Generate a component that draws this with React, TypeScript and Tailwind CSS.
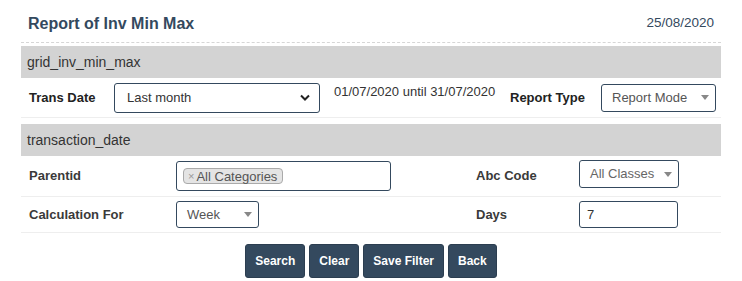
import React from "react";

function Caret() {
  return (
    <svg width="8" height="5" viewBox="0 0 8 5" className="shrink-0">
      <path d="M0 0 L8 0 L4 5 Z" fill="#888" />
    </svg>
  );
}

function Select2({ value, className }: { value: string; className: string }) {
  return (
    <div
      className={`flex items-center justify-between rounded-[3px] border border-[#34495e] bg-white pl-[10px] pr-[6px] text-[#555] ${className}`}
    >
      <span>{value}</span>
      <Caret />
    </div>
  );
}

function Band({ title }: { title: string }) {
  return (
    <div className="flex h-[32px] items-center bg-[#d3d3d3] pl-[6px] text-[14px] text-[#333]">
      {title}
    </div>
  );
}

export default function App() {
  const buttons = ["Search", "Clear", "Save Filter", "Back"];

  return (
    <div className="h-[281px] w-[742px] bg-white font-[family-name:Liberation_Sans,Arial,sans-serif] text-[13px] text-[#333]">
      <div className="ml-[21px] w-[700px]">
        {/* Header */}
        <div className="flex h-[43px] items-center justify-between border-b border-dashed border-[#d6d6d6] pl-[7px] pr-[7px] pt-[5px]">
          <h1 className="text-[16px] font-bold text-[#34495e]">Report of Inv Min Max</h1>
          <span className="text-[13.5px] text-[#34495e]">25/08/2020</span>
        </div>

        <div className="mt-[3px]">
          <Band title="grid_inv_min_max" />
        </div>

        {/* Trans date row */}
        <div className="flex h-[40px] items-center border-b border-[#eeeeee]">
          <div className="w-[93px] pl-[8px] font-bold text-[#222]">Trans Date</div>
          <div className="flex h-[30px] w-[206px] items-center justify-between rounded-[3px] border border-[#34495e] pl-[12px] pr-[9px] text-[#333]">
            <span>Last month</span>
            <svg width="10" height="7" viewBox="0 0 10 7">
              <polyline points="1,1.5 5,5.5 9,1.5" fill="none" stroke="#222" strokeWidth="2" />
            </svg>
          </div>
          <div className="ml-[14px] w-[176px] self-start pt-[4px]">01/07/2020 until 31/07/2020</div>
          <div className="w-[91px] font-bold text-[#222]">Report Type</div>
          <Select2 value="Report Mode" className="h-[28px] w-[115px]" />
        </div>

        <div className="mt-[6px]">
          <Band title="transaction_date" />
        </div>

        {/* Parentid row */}
        <div className="flex h-[41px] items-center border-b border-[#eeeeee]">
          <div className="w-[155px] pl-[8px] font-bold text-[#3a3a3a]">Parentid</div>
          <div className="flex h-[30px] w-[215px] items-center rounded-[3px] border border-[#34495e] pl-[6px]">
            <span className="flex h-[16px] items-center rounded-[4px] border border-[#aaa] bg-[#e4e4e4] pl-[4px] pr-[5px] leading-none text-[#555]">
              <span className="mr-[2px] text-[11px] text-[#999]">×</span>
              All Categories
            </span>
          </div>
          <div className="ml-[85px] w-[103px] font-bold text-[#3a3a3a]">Abc Code</div>
          <div className="self-start pt-[4px]">
            <Select2 value="All Classes" className="h-[28px] w-[100px] text-[#666]" />
          </div>
        </div>

        {/* Calculation row */}
        <div className="flex h-[36px] items-center border-b border-[#eeeeee]">
          <div className="w-[155px] pl-[8px] font-bold text-[#3a3a3a]">Calculation For</div>
          <Select2 value="Week" className="h-[27px] w-[83px]" />
          <div className="ml-[217px] w-[103px] font-bold text-[#3a3a3a]">Days</div>
          <div className="flex h-[27px] w-[99px] items-center rounded-[3px] border border-[#34495e] pl-[7px] text-[#333]">
            7
          </div>
        </div>

        {/* Buttons */}
        <div className="mt-[11px] flex justify-center gap-[4px]">
          {buttons.map((b) => (
            <button
              key={b}
              className="h-[34px] rounded-[3px] border border-[#2c3e50] bg-[#34495e] px-[9px] text-[12px] font-bold text-white"
            >
              {b}
            </button>
          ))}
        </div>
      </div>
    </div>
  );
}
